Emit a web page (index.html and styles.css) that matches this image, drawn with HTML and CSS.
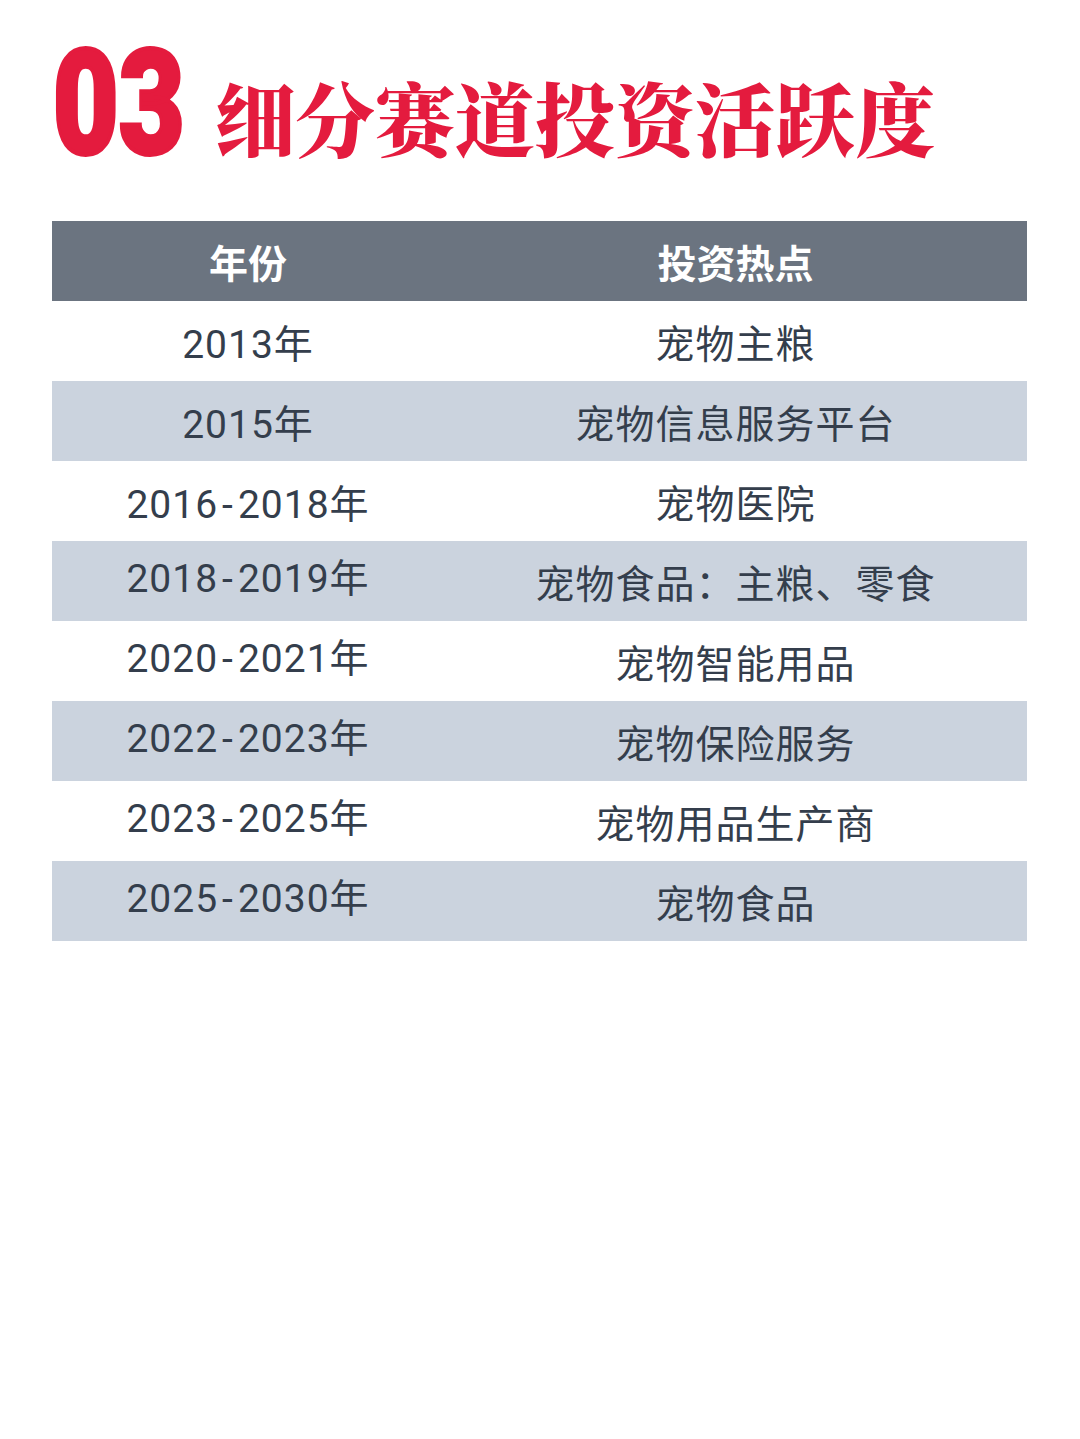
FILE: index.html
```html
<!DOCTYPE html>
<html lang="zh-CN">
<head>
<meta charset="utf-8">
<title>细分赛道投资活跃度</title>
<link rel="stylesheet" href="styles.css">
</head>
<body>
<div class="page">
  <div class="title">
    <span class="num">03</span>
    <h1 class="heading">细分赛道投资活跃度</h1>
  </div>
  <div class="table">
    <div class="row head">
      <div class="cell year">年份</div>
      <div class="cell topic">投资热点</div>
    </div>
    <div class="row">
      <div class="cell year">2013年</div>
      <div class="cell topic">宠物主粮</div>
    </div>
    <div class="row alt">
      <div class="cell year">2015年</div>
      <div class="cell topic">宠物信息服务平台</div>
    </div>
    <div class="row">
      <div class="cell year">2016<span class="dash">-</span>2018年</div>
      <div class="cell topic">宠物医院</div>
    </div>
    <div class="row alt">
      <div class="cell year up">2018<span class="dash">-</span>2019年</div>
      <div class="cell topic">宠物食品：主粮、零食</div>
    </div>
    <div class="row">
      <div class="cell year up">2020<span class="dash">-</span>2021年</div>
      <div class="cell topic">宠物智能用品</div>
    </div>
    <div class="row alt">
      <div class="cell year up">2022<span class="dash">-</span>2023年</div>
      <div class="cell topic">宠物保险服务</div>
    </div>
    <div class="row">
      <div class="cell year up">2023<span class="dash">-</span>2025年</div>
      <div class="cell topic">宠物用品生产商</div>
    </div>
    <div class="row alt">
      <div class="cell year up">2025<span class="dash">-</span>2030年</div>
      <div class="cell topic">宠物食品</div>
    </div>
  </div>
</div>
</body>
</html>
```

FILE: styles.css
```css
* { box-sizing: border-box; }
html, body {
  margin: 0;
  padding: 0;
  background: #ffffff;
}
body {
  width: 1080px;
  height: 1439px;
  overflow: hidden;
  font-family: Roboto, "Noto Sans CJK SC", sans-serif;
}
.page {
  padding: 40px 53px 0 52px;
}
.title {
  display: flex;
  align-items: flex-end;
  gap: 30px;
  height: 130px;
}
.num {
  display: inline-block;
  width: 133px;
  font-family: Roboto, "Liberation Sans", sans-serif;
  font-weight: 900;
  font-size: 146px;
  line-height: 130px;
  color: #e41b3e;
  -webkit-text-stroke: 4px #e41b3e;
  transform: scaleX(0.78);
  transform-origin: left center;
  white-space: nowrap;
  letter-spacing: 0;
  padding-left: 1px;
}
.heading {
  margin: 0 0 6px 0;
  font-family: "Noto Serif CJK SC", "Noto Sans CJK SC", serif;
  font-weight: 900;
  font-size: 80px;
  line-height: 96px;
  color: #e41b3e;
  letter-spacing: 0;
  white-space: nowrap;
}
.table {
  margin-top: 51px;
  width: 975px;
}
.row {
  display: grid;
  grid-template-columns: 392px 1fr;
  height: 80px;
  background: #ffffff;
  overflow: hidden;
}
.row.alt {
  background: #cbd3de;
}
.row.head {
  background: #6b7480;
}
.cell {
  text-align: center;
  font-size: 39px;
  line-height: 88px;
  height: 80px;
  color: #343e4c;
  white-space: nowrap;
  letter-spacing: 1px;
}
.cell.year.up {
  line-height: 76px;
}
.dash {
  margin: 0 4px;
}
.row.head .cell {
  color: #ffffff;
  font-weight: 700;
  font-family: "Noto Sans CJK SC", sans-serif;
  letter-spacing: 0;
  line-height: 80px;
}
```
